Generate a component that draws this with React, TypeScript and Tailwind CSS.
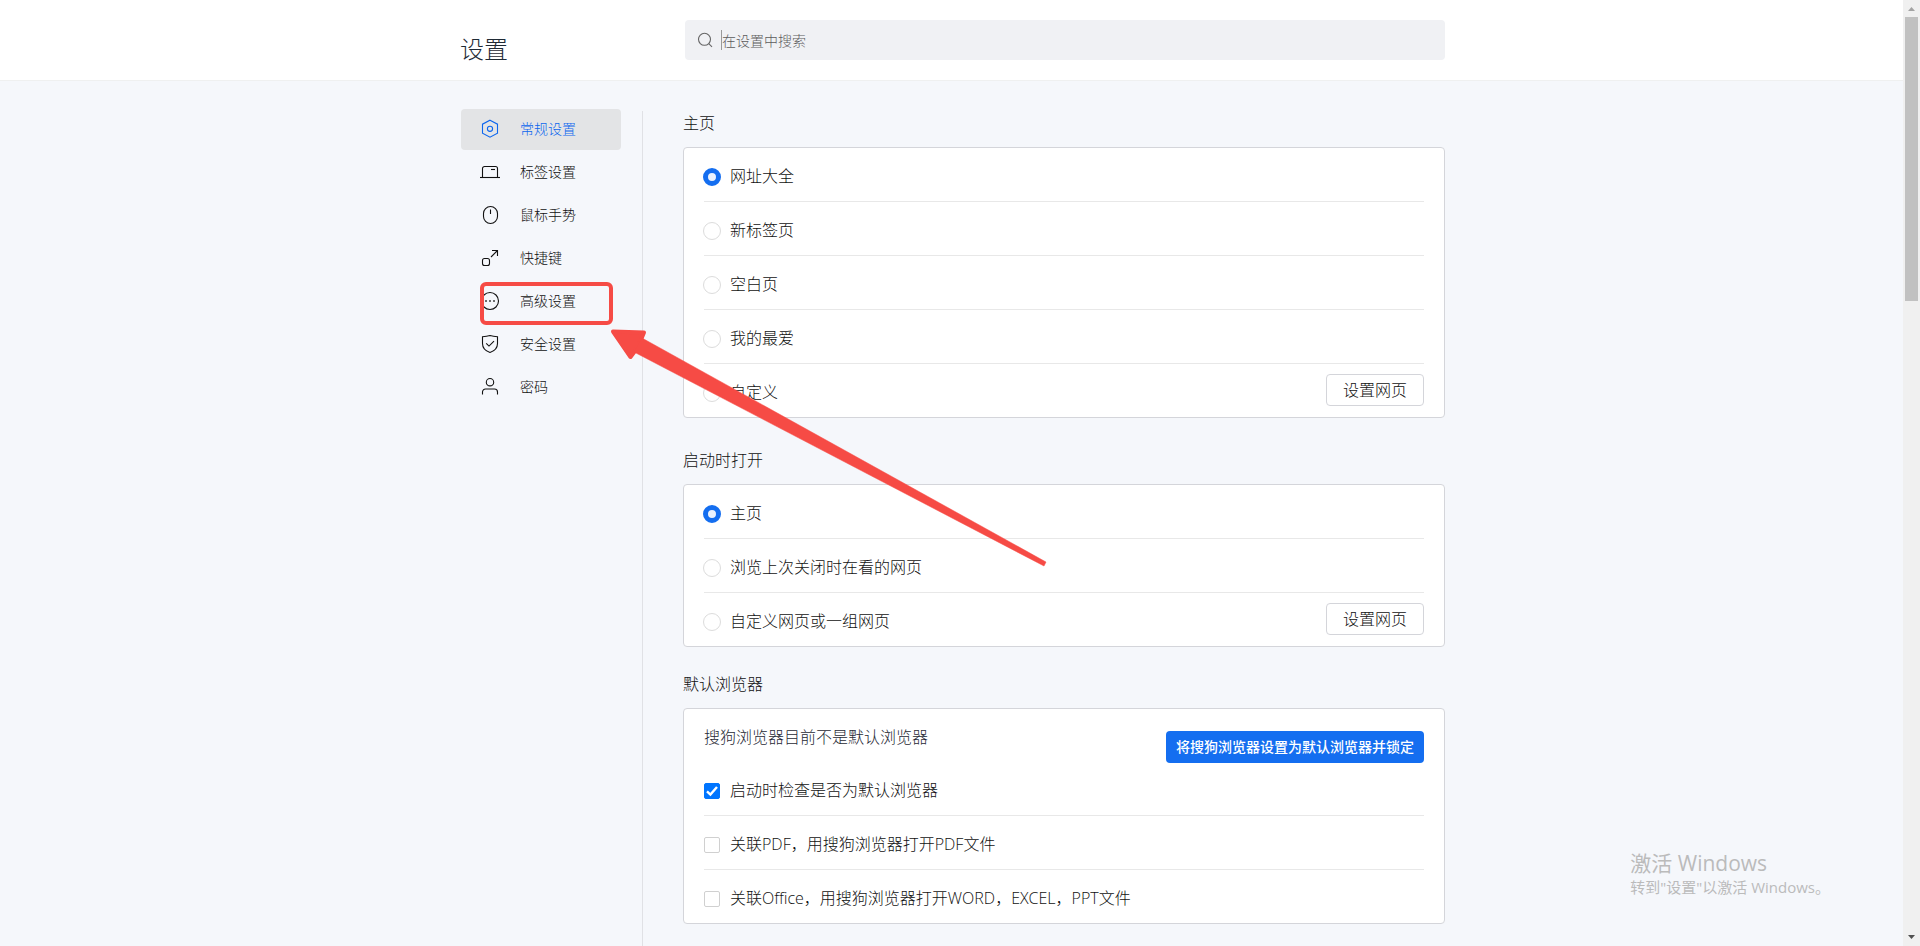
import { useState } from "react";
import type { ReactNode } from "react";

interface NavItem {
  id: string;
  label: string;
  icon: ReactNode;
}

const navItems: NavItem[] = [
  {
    id: "general",
    label: "常规设置",
    icon: (
      <>
        <path d="M10 1.2 17.5 5.2V14.2L10 18.2 2.5 14.2V5.2Z" />
        <circle cx="10" cy="9.8" r="2.6" />
      </>
    ),
  },
  {
    id: "tabs",
    label: "标签设置",
    icon: (
      <>
        <path d="M0 15.5H20" />
        <path d="M2.5 15.5V6.5a2 2 0 0 1 2-2H15.5a2 2 0 0 1 2 2V15.5" />
        <path d="M11 7.5H15" />
      </>
    ),
  },
  {
    id: "mouse",
    label: "鼠标手势",
    icon: (
      <>
        <rect x="3.5" y="1.5" width="14" height="17" rx="7" />
        <path d="M10.5 4.5V9" />
      </>
    ),
  },
  {
    id: "shortcut",
    label: "快捷键",
    icon: (
      <>
        <rect x="2.5" y="10.5" width="7" height="7" rx="2" />
        <path d="M12 2.5H17.5V8" />
        <path d="M17.5 2.5 11 9" />
      </>
    ),
  },
  {
    id: "advanced",
    label: "高级设置",
    icon: (
      <>
        <circle cx="10" cy="10" r="8.5" />
        <path d="M5.2 10H6.8M9.2 10H10.8M13.2 10H14.8" strokeWidth="1.6" />
      </>
    ),
  },
  {
    id: "security",
    label: "安全设置",
    icon: (
      <>
        <path d="M10 1.5C7.5 2.3 5 2.6 2.5 2.7V9.5c0 4.5 3 7.5 7.5 9 4.5-1.5 7.5-4.5 7.5-9V2.7C15 2.6 12.5 2.3 10 1.5Z" />
        <path d="M6.2 9.3 9 12.1 14 7.2" />
      </>
    ),
  },
  {
    id: "password",
    label: "密码",
    icon: (
      <>
        <circle cx="10" cy="5.2" r="3.7" />
        <path d="M2.5 17.5V15a3 3 0 0 1 3-3H14.5a3 3 0 0 1 3 3V17.5" />
      </>
    ),
  },
];

const homeOptions = ["网址大全", "新标签页", "空白页", "我的最爱", "自定义"];
const startupOptions = ["主页", "浏览上次关闭时在看的网页", "自定义网页或一组网页"];
const browserOptions = [
  "启动时检查是否为默认浏览器",
  "关联PDF，用搜狗浏览器打开PDF文件",
  "关联Office，用搜狗浏览器打开WORD，EXCEL，PPT文件",
];

const rowClass =
  "flex h-[54px] items-start justify-between border-b border-[#e8e8e8] last:h-[53px] last:border-b-0";

function Section({ title, children }: { title: string; children: ReactNode }) {
  return (
    <section>
      <h2 className="mb-3 text-base leading-6">{title}</h2>
      <div className="rounded border border-[#d4d5da] bg-white px-5">{children}</div>
    </section>
  );
}

function RadioGroup({ name, options }: { name: string; options: string[] }) {
  const [selected, setSelected] = useState(options[0]);

  return (
    <>
      {options.map((option, i) => (
        <div key={option} className={rowClass}>
          <label className="-ml-px flex items-center gap-[9px] pt-4 leading-6">
            <input
              type="radio"
              name={name}
              checked={selected === option}
              onChange={() => setSelected(option)}
              className="mt-0.5 size-[18px] appearance-none rounded-full border border-[#dcdcdc] bg-white checked:border-5 checked:border-[#146ef0] checked:bg-[#eaf2fe]"
            />
            {option}
          </label>
          {i === options.length - 1 && (
            <button className="mt-[10px] h-8 rounded border border-[#d4d5da] bg-white px-4 leading-6">
              设置网页
            </button>
          )}
        </div>
      ))}
    </>
  );
}

function CheckboxRow({ label, defaultChecked }: { label: string; defaultChecked?: boolean }) {
  return (
    <div className={rowClass}>
      <label className="flex items-center gap-[10px] pt-4 leading-6">
        <span className="mt-0.5 grid size-4">
          <input
            type="checkbox"
            defaultChecked={defaultChecked}
            className="peer col-start-1 row-start-1 size-4 appearance-none rounded-xs border border-[#d0d0d0] bg-white checked:border-[#0075ff] checked:bg-[#0075ff]"
          />
          <svg
            viewBox="0 0 16 16"
            className="pointer-events-none invisible col-start-1 row-start-1 size-4 peer-checked:visible"
            fill="none"
            stroke="#fff"
            strokeWidth="2.4"
          >
            <path d="M3 8.400 6.400 11.600 13 4" />
          </svg>
        </span>
        {label}
      </label>
    </div>
  );
}

export default function App() {
  const [active, setActive] = useState("general");

  return (
    <div className="relative flex h-screen overflow-hidden bg-[#f5f7fb] font-['Open_Sans','Noto_Sans_CJK_SC',sans-serif] text-base font-light text-[#111]">
      <div className="flex min-w-0 flex-1 flex-col">
        <header className="h-[81px] shrink-0 border-b border-[#eff0f0] bg-white">
          <div className="mx-auto flex max-w-[987px] pl-0.5">
            <h1 className="w-[225px] pt-[33px] text-2xl leading-8 text-[#1f2a35]">设置</h1>
            <label className="mt-5 flex h-10 flex-1 items-center rounded bg-[#f0f1f4] pl-3">
              <svg
                viewBox="0 0 16 16"
                className="mr-2 size-4 shrink-0"
                fill="none"
                stroke="#666"
                strokeWidth="1.1"
                aria-hidden="true"
              >
                <circle cx="7.5" cy="7.3" r="6" />
                <path d="M11.8 11.600 15 14.800" />
              </svg>
              <span className="h-5 w-px bg-[#999]" />
              <input
                type="text"
                aria-label="在设置中搜索"
                placeholder="在设置中搜索"
                className="h-full flex-1 bg-transparent text-sm outline-none placeholder:text-[#5c5c5c]"
              />
            </label>
          </div>
        </header>

        <div className="mx-auto flex min-h-0 w-full max-w-[987px] flex-1 pl-[3px]">
          <nav className="flex w-[181px] shrink-0 flex-col gap-0.5 pt-7">
            {navItems.map((item) => (
              <button
                key={item.id}
                onClick={() => setActive(item.id)}
                className={`flex h-[41px] w-40 items-center rounded pb-0.5 pl-[19px] text-sm ${
                  active === item.id ? "bg-[#e3e4e6] text-[#0d66ee]" : "text-[#111]"
                }`}
              >
                <svg
                  viewBox="0 0 20 20"
                  className="mr-5 size-5 shrink-0"
                  fill="none"
                  stroke="currentColor"
                  strokeWidth="1.1"
                  aria-hidden="true"
                >
                  {item.icon}
                </svg>
                {item.label}
              </button>
            ))}
          </nav>

          <main className="mt-[30px] flex-1 border-l border-[#e0e1e5] pl-10">
            <Section title="主页">
              <RadioGroup name="home" options={homeOptions} />
            </Section>
            <div className="mt-[30px]">
              <Section title="启动时打开">
                <RadioGroup name="startup" options={startupOptions} />
              </Section>
            </div>
            <div className="mt-[25px]">
              <Section title="默认浏览器">
                <div className="flex h-[53px] items-start justify-between">
                  <p className="pt-4 leading-6 text-[#1f2a35]">搜狗浏览器目前不是默认浏览器</p>
                  <button className="mt-[22px] h-8 shrink-0 rounded bg-[#146ef0] px-[10px] text-sm font-medium text-white">
                    将搜狗浏览器设置为默认浏览器并锁定
                  </button>
                </div>
                {browserOptions.map((option, i) => (
                  <CheckboxRow key={option} label={option} defaultChecked={i === 0} />
                ))}
              </Section>
            </div>
          </main>
        </div>
      </div>

      {/* Scrollbar */}
      <div className="flex w-[17px] shrink-0 flex-col items-center justify-between bg-[#f0f0f0]">
        <div className="flex h-[30%] w-full flex-col">
          <svg viewBox="0 0 17 17" className="size-[17px] shrink-0" aria-hidden="true">
            <path d="M5 11 8.500 7 12 11Z" fill="#a3a3a3" />
          </svg>
          <div className="mr-0.5 ml-0.5 h-[284px] shrink-0 bg-[#c1c1c1]" />
        </div>
        <svg viewBox="0 0 17 17" className="size-[17px]" aria-hidden="true">
          <path d="M5 6 8.500 10 12 6Z" fill="#505050" />
        </svg>
      </div>

      {/* System watermark */}
      <div className="pointer-events-none absolute right-[90px] bottom-[47px] text-[#bbb]">
        <p className="text-[21px] leading-6 font-normal">激活 Windows</p>
        <p className="text-[15px] leading-6 font-normal">转到"设置"以激活 Windows。</p>
      </div>

      {/* Callout on the advanced item */}
      <div className="pointer-events-none absolute top-[282px] left-[480px] h-[43px] w-[133px] rounded-md border-4 border-[#f64b45]" />
      <svg
        viewBox="600 320 460 260"
        className="pointer-events-none absolute top-[320px] left-[600px] h-[260px] w-[460px]"
        fill="#f64b45"
        stroke="#f64b45"
        strokeLinejoin="round"
        aria-hidden="true"
      >
        <path d="M613 331.500 644 332.500 640.500 341 635 351 630.500 357Z" strokeWidth="4" />
        <path d="M642 338 1046 562 1044 566 634 352Z" strokeWidth="0.500" />
      </svg>
    </div>
  );
}
